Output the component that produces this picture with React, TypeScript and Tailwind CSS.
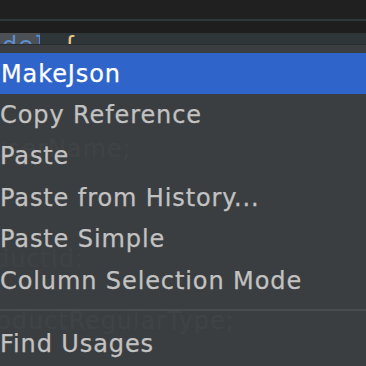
import React from "react";

const font = { fontFamily: '"DejaVu Sans", "Liberation Sans", sans-serif' };

const items = [
  "Copy Reference",
  "Paste",
  "Paste from History...",
  "Paste Simple",
  "Column Selection Mode",
];

export default function App() {
  return (
    <div className="w-[366px] h-[366px] overflow-hidden bg-[#1f1f1f] flex flex-col" style={font}>
      <div className="h-[19px] bg-[#202020]" />
      <div className="h-[2px] bg-[#31383b]" />
      <div className="h-[12px] bg-[#1e1e1e]" />
      <div className="h-[11px] flex overflow-hidden">
        <div className="w-[40px] bg-[#4b5154] overflow-hidden">
          <div className="text-[24px] leading-[24px] text-[#5d8ed2] mt-[1px] ml-[2px] tracking-[1px]">de]</div>
        </div>
        <div className="flex-1 bg-[#2f3639] overflow-hidden">
          <div className="text-[24px] leading-[24px] text-[#e6c98a] mt-[1px] ml-[22px]">{"{"}</div>
        </div>
      </div>
      <div className="h-[1px] bg-[#2b2e30]" />
      <div className="relative flex-1 bg-[#3b3e40] pt-[8px] flex flex-col text-[24px] tracking-[0.9px] [-webkit-text-stroke:0.25px]">
        <div className="absolute left-[-8px] top-[86px] text-[#404345] [-webkit-text-stroke:0px]">userName;</div>
        <div className="absolute left-[-6px] top-[196px] text-[#3f4244] [-webkit-text-stroke:0px]">ductId;</div>
        <div className="absolute left-[-14px] top-[258px] text-[#404345] [-webkit-text-stroke:0px]">roductRegularType;</div>
        <div className="relative h-[41px] bg-[#2f65ca] text-white flex items-center pl-[1px]">MakeJson</div>
        {items.map((t) => (
          <div key={t} className="relative h-[41.5px] text-[#c2c2c2] flex items-center">
            {t}
          </div>
        ))}
        <div className="relative h-[21.5px] flex flex-col pt-[7px]">
          <div className="h-[2px] bg-[#4a4d4f]" />
        </div>
        <div className="relative h-[41.5px] text-[#c2c2c2] flex items-center">Find Usages</div>
      </div>
    </div>
  );
}
